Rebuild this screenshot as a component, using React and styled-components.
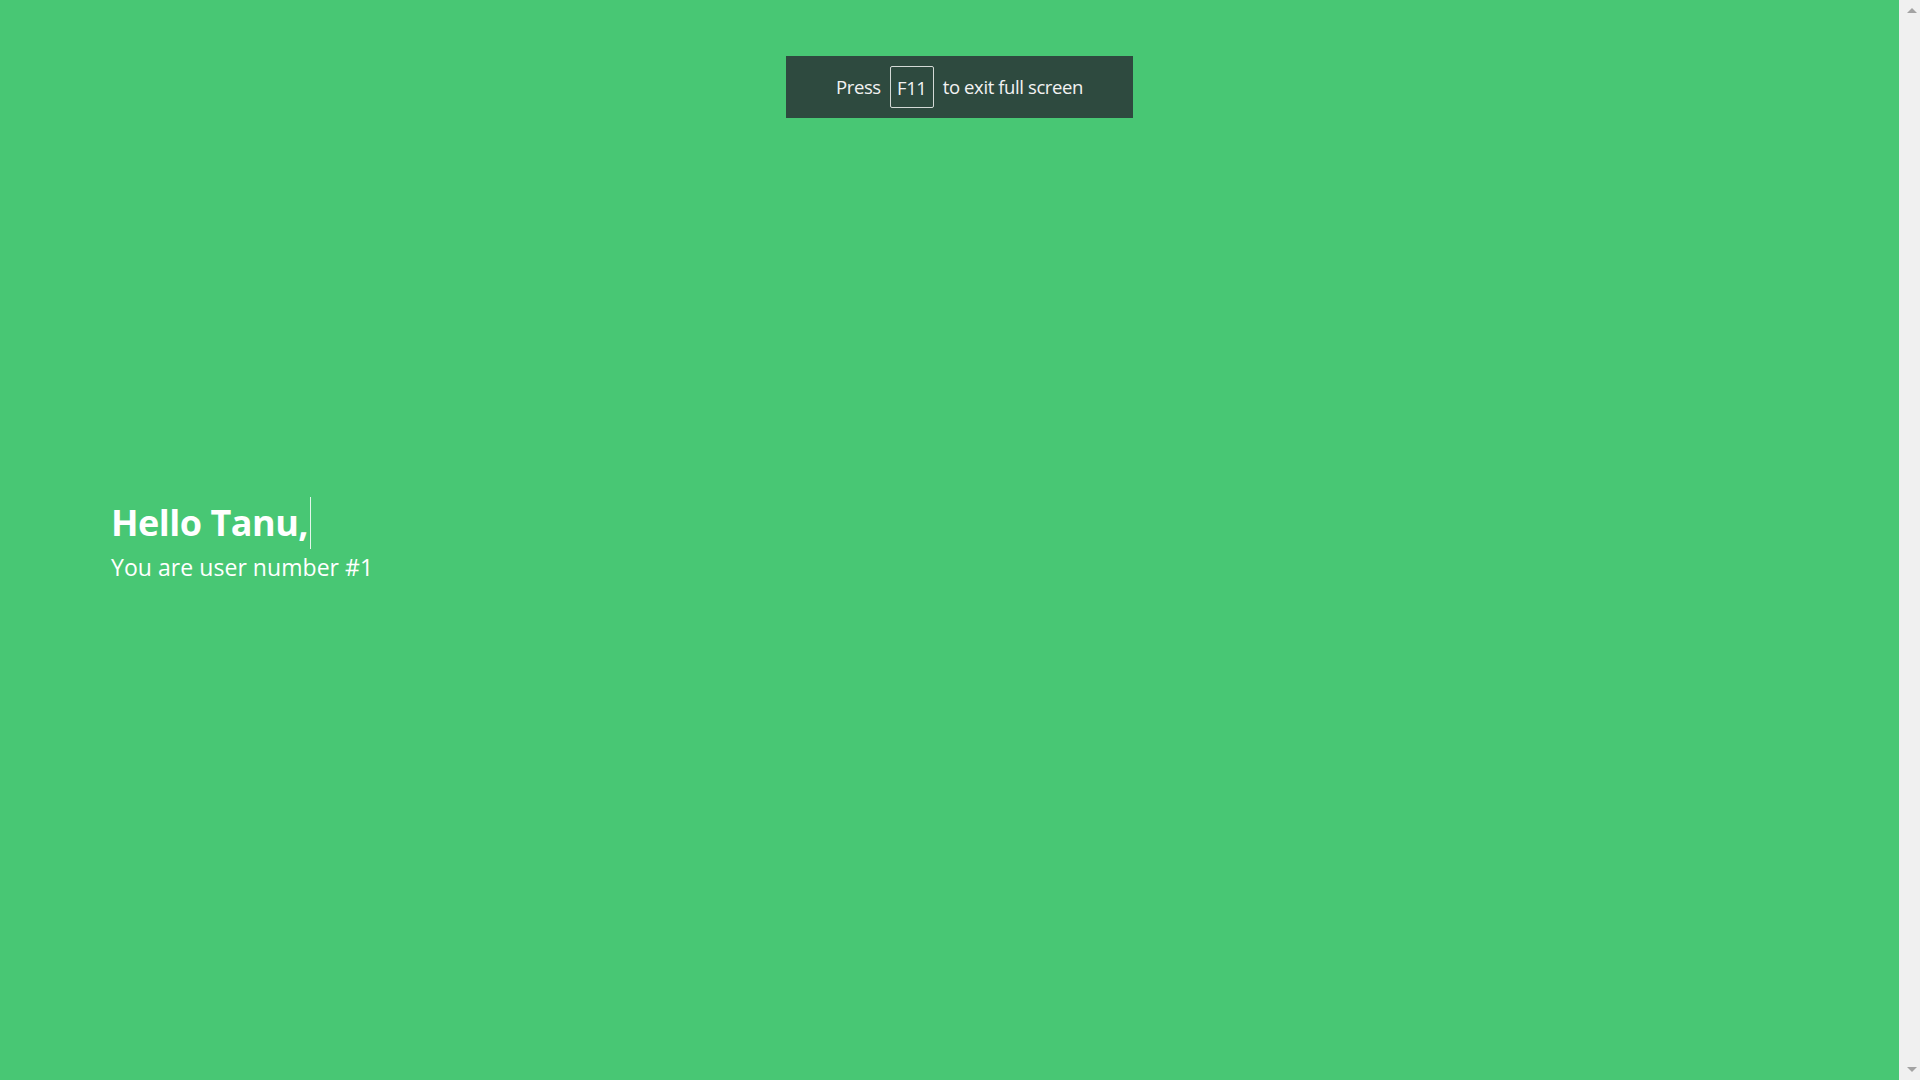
import styled, { createGlobalStyle } from 'styled-components';

const GlobalStyle = createGlobalStyle`
  html, body {
    margin: 0;
    padding: 0;
    height: 100%;
    overflow: hidden;
  }
  body {
    font-family: 'Open Sans', 'Noto Sans', sans-serif;
  }
`;

const Page = styled.div`
  display: flex;
  width: 100vw;
  height: 100vh;
  background-color: #48c774;
`;

const Hero = styled.section`
  flex: 1;
  display: flex;
  flex-direction: column;
  justify-content: center;
  padding: 0 0 0 111px;
  color: #fff;
`;

const Title = styled.h1`
  margin: 0;
  font-size: 36px;
  font-weight: 700;
  line-height: 52px;
  letter-spacing: -0.5px;

  span {
    display: inline-block;
    padding-right: 2px;
    border-right: 1px solid rgba(255, 255, 255, 0.85);
  }
`;

const Subtitle = styled.h2`
  margin: 2px 0 0;
  font-size: 23px;
  font-weight: 400;
  line-height: 32px;
  letter-spacing: 0.05px;
`;

const Scrollbar = styled.div`
  width: 21px;
  display: flex;
  flex-direction: column;
  justify-content: space-between;
  align-items: center;
  background-color: #f0f0f0;
  padding: 8px 0 8px 4px;
  box-sizing: border-box;
`;

const Arrow = styled.div`
  width: 0;
  height: 0;
  border-left: 5px solid transparent;
  border-right: 5px solid transparent;
  ${(props) =>
    props.down
      ? 'border-top: 5px solid #a3a3a3;'
      : 'border-bottom: 5px solid #a3a3a3;'}
`;

const Toast = styled.div`
  position: fixed;
  top: 56px;
  left: 786px;
  width: 347px;
  height: 62px;
  box-sizing: border-box;
  padding-bottom: 2px;
  display: flex;
  align-items: center;
  justify-content: center;
  gap: 9px;
  background-color: #2e4a3f;
  color: #f2f2f2;
  font-size: 18.5px;
  letter-spacing: -0.4px;
`;

const Key = styled.span`
  display: inline-flex;
  align-items: center;
  justify-content: center;
  width: 44px;
  height: 42px;
  margin-top: 2px;
  box-sizing: border-box;
  border: 1.5px solid #d4d9d6;
  border-radius: 2px;
`;

export default function App() {
  return (
    <>
      <GlobalStyle />
      <Page>
        <Hero>
          <Title>
            <span>Hello Tanu,</span>
          </Title>
          <Subtitle>You are user number #1</Subtitle>
        </Hero>
        <Scrollbar>
          <Arrow />
          <Arrow down />
        </Scrollbar>
      </Page>
      <Toast>
        <span>Press</span>
        <Key>F11</Key>
        <span>to exit full screen</span>
      </Toast>
    </>
  );
}
